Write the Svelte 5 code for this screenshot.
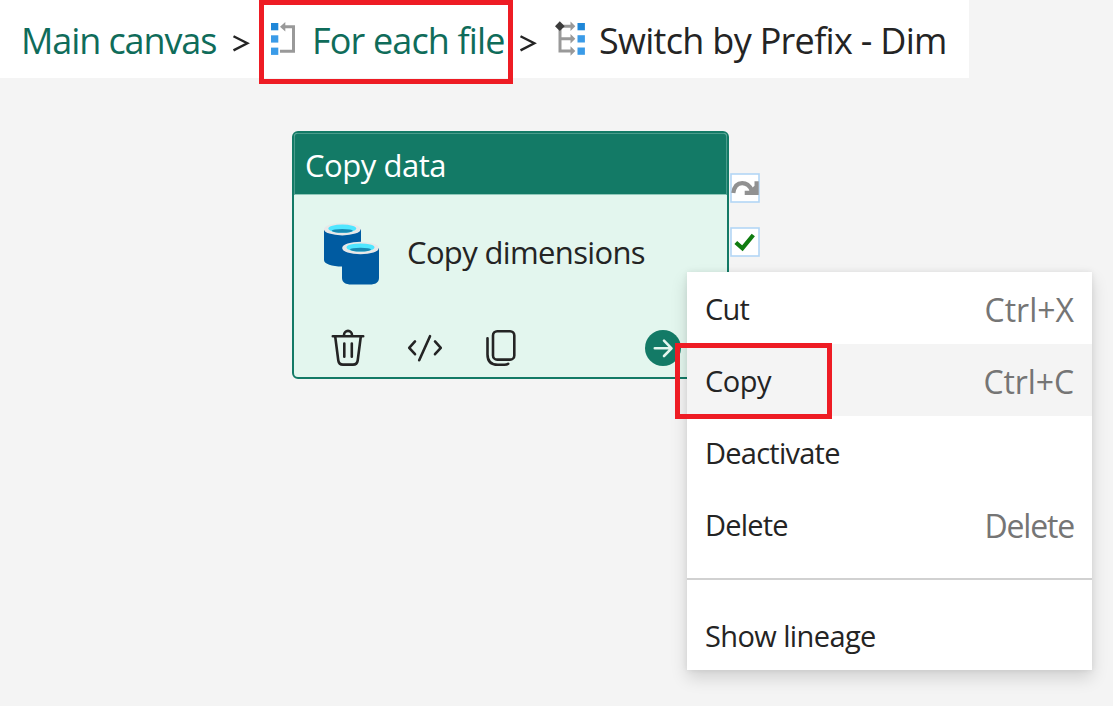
<script>
  const menuItems = [
    { label: 'Cut', keys: 'Ctrl+X', space: -0.8, keySpace: 0 },
    { label: 'Copy', keys: 'Ctrl+C', space: -0.5, keySpace: -0.1, active: true },
    { label: 'Deactivate', keys: '', space: -0.75, keySpace: 0 },
    { label: 'Delete', keys: 'Delete', space: -0.8, keySpace: -1.2 }
  ];
</script>

<main class="canvas">
  <nav class="breadcrumb">
    <span class="crumb link main">Main canvas</span>
    <svg class="sep first" width="18" height="20" viewBox="0 0 18 20"><path d="M1.5 2.2 15.3 9.3 1.5 16.4" /></svg>
    <span class="current-loop">
      <svg class="loop-icon" width="28" height="36" viewBox="0 0 28 36">
        <g fill="#3a9be8">
          <rect x="1" y="2" width="7.3" height="7.3" fill="#1f87d8" />
          <rect x="1" y="14.3" width="7.3" height="7.3" />
          <rect x="1" y="26.6" width="7.3" height="7.3" />
        </g>
        <path d="M14 5.7H23.5V30.2H10" fill="none" stroke="#999" stroke-width="3" />
        <path d="M10 5.7 15.3 1V10.4Z" fill="#999" />
      </svg>
      <span class="crumb link loop">For each file</span>
    </span>
    <svg class="sep second" width="18" height="20" viewBox="0 0 18 20"><path d="M1.5 2.2 15.3 9.3 1.5 16.4" /></svg>
    <svg class="switch-icon" width="32" height="36" viewBox="0 0 32 36">
      <path d="M5 6V30H16M5 17.7H16M5 5.2H16" fill="none" stroke="#999" stroke-width="3" />
      <path d="M15.5.5 20.3 5.2 15.5 10ZM15.5 13 20.3 17.7 15.5 22.5ZM15.5 25.3 20.3 30 15.5 34.8Z" fill="#999" />
      <path d="M4.8.3 9.7 5.2 4.8 10 0 5.2Z" fill="#3c3c3c" />
      <g fill="#3a9be8">
        <rect x="22.5" y="2" width="7.4" height="7.3" fill="#1f87d8" />
        <rect x="22.5" y="14.2" width="7.4" height="7.3" />
        <rect x="22.5" y="26.5" width="7.4" height="7.3" />
      </g>
    </svg>
    <span class="crumb switch">Switch by Prefix - Dim</span>
  </nav>

  <section class="activity">
    <header>Copy data</header>
    <div class="body">
      <svg width="58" height="64" viewBox="0 0 58 64">
        <path d="M1 7V38C1 42 9 44.5 19 44.5H38V7Z" fill="#005ba1" />
        <ellipse cx="19.3" cy="7.2" rx="18.3" ry="6.2" fill="#e8e8e8" />
        <ellipse cx="19.3" cy="6.6" rx="14" ry="4" fill="#50e6ff" />
        <ellipse cx="19.3" cy="8.8" rx="10.5" ry="1.9" fill="#198ab3" />
        <path d="M19 26V56C19 60.5 23 62.5 28 62.5H47C52 62.5 56 60.5 56 56V26Z" fill="#005ba1" />
        <ellipse cx="37.5" cy="26" rx="18.3" ry="6.2" fill="#e8e8e8" />
        <ellipse cx="37.5" cy="25.4" rx="14" ry="4" fill="#50e6ff" />
        <ellipse cx="37.5" cy="27.6" rx="10.5" ry="1.9" fill="#198ab3" />
      </svg>
      <span>Copy dimensions</span>
    </div>
    <footer>
      <svg class="tool" width="36" height="40" viewBox="0 0 36 40">
        <path d="M2.8 8.2H33.2M5.2 8.5 8.3 32.5Q8.9 36.6 13 36.6H23Q27.1 36.6 27.7 32.5L30.8 8.5M14 7.8V6.9A4 4 0 0 1 22 6.9V7.8M14.3 15.5V28.8M21.8 15.5V28.8" />
      </svg>
      <svg class="tool code" width="36" height="40" viewBox="0 0 36 40">
        <path d="M8 13.4 2.2 19.9 8 26.2M28 13.4 33.8 19.9 28 26.2M23 8.2 12.2 32.2" />
      </svg>
      <svg class="tool copy" width="34" height="40" viewBox="0 0 34 40">
        <rect x="9" y="3.2" width="21.3" height="28.4" rx="4.2" />
        <path d="M3.5 10.3V26.5Q3.5 36.8 13.8 36.8H20.5Q22.9 36.8 24.2 35.8" />
      </svg>
      <svg class="go" width="36" height="36" viewBox="0 0 36 36">
        <circle cx="18" cy="18" r="18" fill="#137a66" />
        <path d="M9.8 18.3H26M19 10.6 26.5 18.3 19 26" fill="none" stroke="#e3f6ee" stroke-width="2.6" stroke-linecap="round" stroke-linejoin="round" />
      </svg>
    </footer>
  </section>

  <div class="ports">
    <svg width="30" height="30" viewBox="0 0 30 30">
      <rect x="1" y="1" width="28" height="28" fill="#fff" stroke="#b3d6f5" stroke-width="1.6" />
      <path d="M3.3 20C4.3 13.3 7.5 10.2 12.2 10.2 17 10.2 19.7 12.8 22 17.5" fill="none" stroke="#919191" stroke-width="4.2" />
      <path d="M28.7 8.3V22H14.7V17.8H19L24.5 12.8V8.3Z" fill="#919191" />
    </svg>
    <svg width="30" height="30" viewBox="0 0 30 30">
      <rect x="1" y="1" width="28" height="28" fill="#fff" stroke="#b3d6f5" stroke-width="1.6" />
      <path d="M5.8 15.5 12.4 21.3 23.3 8" fill="none" stroke="#107c10" stroke-width="4.2" />
    </svg>
  </div>

  <div class="menu">
    {#each menuItems as item}
      <div class="row" class:active={item.active}>
        <span class="label" style="letter-spacing: {item.space}px">{item.label}</span>
        <span class="keys" style="letter-spacing: {item.keySpace}px">{item.keys}</span>
      </div>
    {/each}
    <hr />
    <div class="row"><span class="label">Show lineage</span></div>
  </div>

  <div class="marker crumb-marker"></div>
  <div class="marker menu-marker"></div>
</main>

<style>
  :global(body) { margin: 0; }
  .canvas {
    position: relative;
    width: 1113px;
    height: 706px;
    overflow: hidden;
    background: #f4f4f4;
    color: #242424;
    font-family: "Open Sans", "Noto Sans", sans-serif;
  }
  svg { display: block; flex: none; }
  .breadcrumb {
    display: flex;
    align-items: center;
    box-sizing: border-box;
    width: 969px;
    height: 78px;
    padding: 0 0 0 21px;
    background: #fff;
    white-space: nowrap;
  }
  .crumb { font-size: 36px; line-height: 80px; height: 76px; }
  .link { color: #0f6c5a; }
  .main { width: 197px; letter-spacing: -1.1px; }
  .sep { margin-top: 9px; }
  .sep path { fill: none; stroke: #242424; stroke-width: 2.4; }
  .first { margin-left: 14px; }
  .current-loop { display: flex; align-items: center; margin-left: 20px; }
  .loop-icon, .switch-icon { margin-top: -1px; }
  .loop { width: 192px; margin-left: 14px; letter-spacing: -0.85px; }
  .second { margin-left: 15px; }
  .switch-icon { margin-left: 18px; }
  .switch { margin-left: 12px; letter-spacing: -0.7px; }

  .activity {
    position: absolute;
    left: 292px;
    top: 131px;
    box-sizing: border-box;
    width: 436.5px;
    height: 248px;
    border: 2px solid #137a66;
    border-radius: 6px;
    background: #e3f6ee;
    overflow: hidden;
  }
  header {
    box-sizing: border-box;
    height: 62px;
    padding-left: 10px;
    border: 1px solid #4b9c8c;
    border-bottom-color: #8fc8b9;
    border-radius: 3px 3px 0 0;
    background: #137a66;
    color: #fff;
    font-size: 31px;
    line-height: 62px;
    letter-spacing: -0.45px;
  }
  .body {
    display: flex;
    align-items: center;
    height: 118px;
    padding-left: 29px;
    font-size: 31px;
    letter-spacing: -0.65px;
  }
  .body span { margin: -4px 0 0 26px; }
  footer { display: flex; align-items: center; height: 72px; margin-top: -1px; padding-left: 36px; }
  .tool path, .tool rect {
    fill: none;
    stroke: #242424;
    stroke-width: 2.6;
    stroke-linecap: round;
    stroke-linejoin: round;
  }
  .code { margin-left: 41px; }
  .copy { margin-left: 41px; }
  .go { margin-left: 127px; }

  .ports {
    position: absolute;
    left: 729.5px;
    top: 172.5px;
    display: grid;
    gap: 24px;
  }
  .menu {
    position: absolute;
    left: 687px;
    top: 272px;
    width: 405px;
    height: 398px;
    background: #fff;
    box-shadow: 0 8px 16px rgba(0, 0, 0, 0.14), 0 0 6px rgba(0, 0, 0, 0.08);
  }
  .row {
    display: flex;
    justify-content: space-between;
    align-items: center;
    height: 72px;
    padding: 0 18px;
  }
  .active { background: #f4f4f4; }
  .label { font-size: 29px; letter-spacing: -0.6px; margin-top: 1px; }
  .keys { font-size: 32px; color: #757575; margin-top: 2px; }
  hr { height: 2px; margin: 18px 0 19px; border: 0; background: #d1d1d1; }

  .marker { position: absolute; box-sizing: border-box; border: 5px solid #ee1c24; }
  .crumb-marker { left: 259px; top: 0; width: 254px; height: 84px; }
  .menu-marker { left: 675px; top: 343px; width: 157px; height: 76px; }
</style>
